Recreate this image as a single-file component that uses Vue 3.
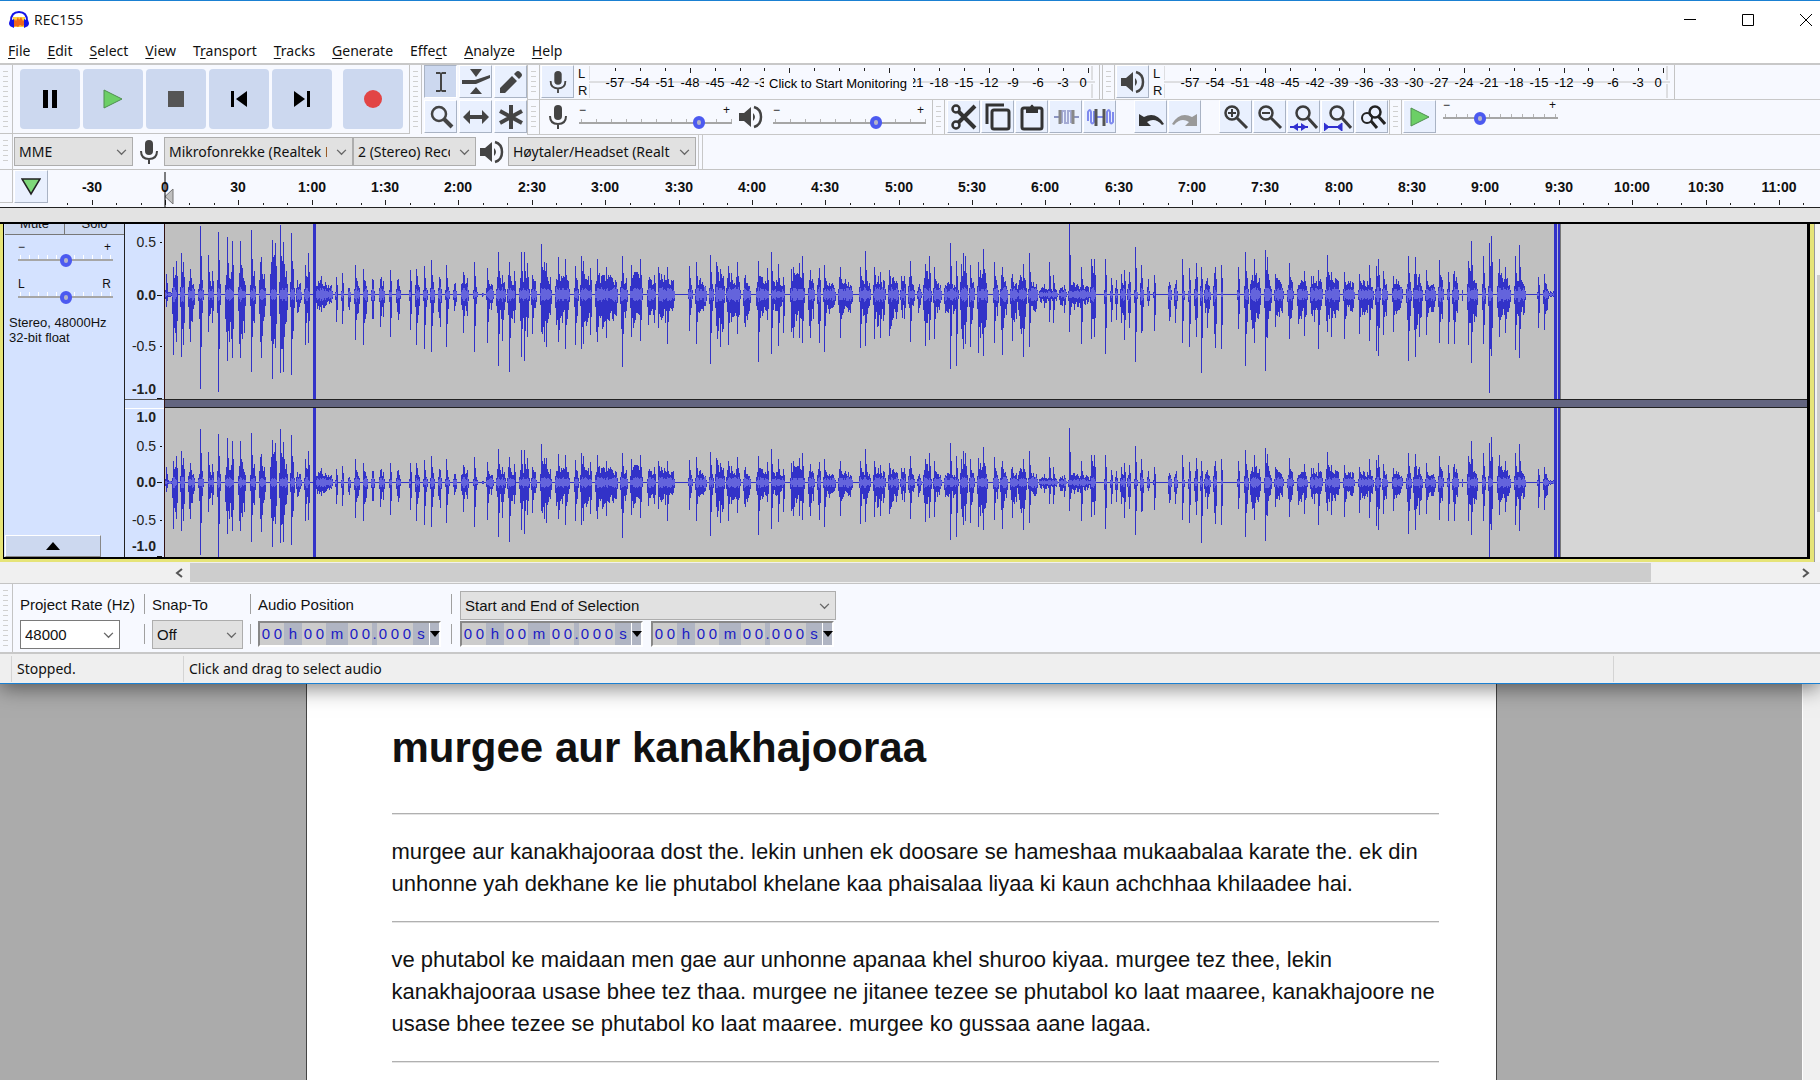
<script setup>
const menus = ['File', 'Edit', 'Select', 'View', 'Transport', 'Tracks', 'Generate', 'Effect', 'Analyze', 'Help']
const accel = { Effect: 4, Transport: 1 }
const menuParts = menus.map((m) => {
  const i = accel[m] ?? 0
  return [m.slice(0, i), m.slice(i, i + 1), m.slice(i + 1)]
})

const transport = [
  { icon: 'pause', label: 'Pause' },
  { icon: 'play', label: 'Play' },
  { icon: 'stop', label: 'Stop' },
  { icon: 'start', label: 'Skip to Start' },
  { icon: 'end', label: 'Skip to End' },
  { icon: 'record', label: 'Record' },
]
const tools = [
  { icon: 'ibeam', label: 'Selection Tool' },
  { icon: 'envelope', label: 'Envelope Tool' },
  { icon: 'pencil', label: 'Draw Tool' },
  { icon: 'zoom', label: 'Zoom Tool' },
  { icon: 'shift', label: 'Time Shift Tool' },
  { icon: 'multi', label: 'Multi-Tool' },
]
const editGroups = [
  [['cut', 'Cut'], ['copy', 'Copy'], ['paste', 'Paste'], ['trim', 'Trim Audio'], ['silence', 'Silence Audio']],
  [['undo', 'Undo'], ['redo', 'Redo']],
  [['zoomin', 'Zoom In'], ['zoomout', 'Zoom Out'], ['fitsel', 'Fit Selection'], ['fitproj', 'Fit Project'], ['toggle', 'Zoom Toggle']],
]

// dB scale of the level meters: one mark each 3 dB, from -57 to 0
const dbMarks = Array.from({ length: 20 }, (_, i) => {
  const db = -57 + i * 3
  return { db, x: Math.round(26 + i * 24.9), tall: db % 12 === 0 }
})
// the monitoring hint covers these marks of the recording meter
const covered = (m, db) => m === 'mic' && db >= -36 && db <= -24

// time ruler: one small mark each 10 s, a label each 30 s
const clock = (s) => {
  if (Math.abs(s) < 60) return String(s)
  return Math.floor(s / 60) + ':' + String(s % 60).padStart(2, '0')
}
const timeMarks = Array.from({ length: 74 }, (_, i) => {
  const s = (i - 6) * 10
  return { s, x: Math.round(117 + (s / 30) * 73.36), label: s % 30 === 0 && s > -60 ? clock(s) : '' }
})

const upperScale = [['0.5', 18], ['0.0', 71], ['-0.5', 122], ['-1.0', 165]]
const lowerScale = [['1.0', 193], ['0.5', 222], ['0.0', 258], ['-0.5', 296], ['-1.0', 322]]

// Speech bursts: from, to, body above, body below, then peaks as position, above, below.
// Positions are in steps of 1/unit pixel after origin, levels in 1/312 of full scale.
const takes = [
  { origin: -165, unit: 3, bursts: [
    [495, 500, 50, 30, 498, 60, 35], [500, 515, 8, 8], [515, 531, 60, 120, 519, 82, 180, 528, 100, 140],
    [541, 556, 60, 100, 543, 122, 187, 550, 95, 150], [563, 584, 60, 95, 571, 75, 142], [594, 611, 45, 70, 599, 205, 282],
    [623, 641, 40, 60, 625, 118, 112, 637, 70, 85], [652, 664, 90, 110, 655, 186, 292],
    [676, 702, 90, 140, 681, 170, 198, 697, 160, 188], [713, 739, 90, 150, 719, 160, 188], [750, 768, 75, 90, 753, 193, 230],
    [778, 798, 90, 120, 782, 110, 190], [811, 832, 120, 170, 816, 163, 251, 824, 152, 160],
    [837, 863, 90, 190, 839, 208, 233, 848, 155, 230], [870, 885, 80, 120, 874, 182, 240], [888, 907, 38, 45],
    [911, 931, 55, 60, 914, 88, 150, 925, 122, 143], [946, 998, 38, 38, 962, 55, 50], [1005, 1012, 30, 50, 1008, 50, 82],
    [1023, 1032, 30, 55, 1027, 62, 88], [1044, 1054, 35, 75], [1062, 1080, 50, 85, 1064, 88, 135],
    [1088, 1104, 45, 70, 1090, 75, 150], [1112, 1125, 40, 70], [1138, 1156, 45, 75, 1140, 45, 95],
    [1166, 1176, 35, 70, 1170, 73, 125], [1187, 1202, 40, 60, 1193, 45, 75], [1228, 1234, 35, 40, 1229, 73, 105],
    [1246, 1259, 60, 100, 1248, 75, 150],
  ] },
  { origin: 235, unit: 2.8, bursts: [
    [63, 77, 40, 40, 66, 85, 163], [84, 98, 45, 70, 87, 103, 171], [105, 118, 60, 120], [127, 141, 35, 55, 129, 88, 156],
    [147, 160, 38, 60], [172, 193, 55, 70, 177, 65, 115], [204, 217, 25, 30, 206, 96, 171], [230, 236, 10, 12],
    [242, 262, 35, 50, 244, 77, 145], [270, 297, 45, 75, 275, 127, 212, 285, 58, 138], [299, 323, 50, 75, 304, 96, 232, 318, 70, 83],
    [333, 364, 55, 85, 339, 126, 185, 346, 126, 197, 356, 92, 125], [367, 383, 42, 80, 370, 58, 118],
    [392, 425, 65, 115, 395, 149, 110, 402, 95, 140, 408, 92, 155], [435, 475, 60, 95, 443, 110, 140, 461, 104, 162],
    [487, 500, 50, 70, 490, 85, 150], [504, 537, 65, 90, 507, 115, 162, 513, 100, 148, 531, 77, 120],
    [546, 609, 60, 95, 551, 104, 140, 577, 80, 130], [617, 638, 55, 85, 621, 115, 215],
    [645, 680, 70, 95, 648, 88, 125, 672, 106, 137], [691, 716, 45, 75, 710, 58, 83], [721, 770, 50, 80, 723, 80, 100, 747, 80, 148],
    [806, 820, 40, 50, 808, 85, 107], [827, 859, 45, 55, 830, 96, 148], [865, 879, 45, 70, 868, 118, 208],
    [882, 911, 75, 125, 896, 76, 156], [914, 956, 55, 75, 917, 83, 150, 944, 96, 118], [960, 982, 45, 75, 965, 58, 95],
    [998, 1033, 50, 65, 1001, 100, 202, 1028, 78, 75], [1038, 1078, 38, 45, 1039, 127, 178, 1057, 90, 152, 1073, 50, 115],
    [1093, 1135, 60, 90, 1101, 80, 128, 1116, 92, 128, 1126, 115, 143], [1143, 1161, 50, 85, 1147, 72, 128],
    [1168, 1180, 60, 110, 1172, 78, 143], [1184, 1221, 38, 55, 1186, 88, 171], [1226, 1267, 42, 65, 1231, 80, 130],
    [1286, 1320, 45, 60, 1288, 80, 160, 1302, 130, 152], [1324, 1361, 50, 90, 1327, 80, 132, 1343, 66, 130],
    [1366, 1397, 55, 85, 1368, 73, 122], [1401, 1416, 45, 60, 1410, 55, 73], [1423, 1442, 45, 55, 1428, 100, 140],
    [1448, 1462, 30, 45], [1464, 1490, 65, 95, 1470, 90, 152, 1480, 115, 135], [1492, 1518, 40, 50, 1495, 80, 132],
    [1524, 1566, 40, 60, 1539, 152, 223, 1557, 100, 212],
  ] },
  { origin: 785, unit: 2.8, bursts: [
    [28, 50, 85, 135, 36, 122, 162, 43, 115, 148], [54, 71, 50, 75, 57, 88, 156], [75, 106, 70, 120, 79, 95, 173, 93, 136, 182],
    [120, 137, 50, 75, 122, 96, 143], [140, 162, 50, 85, 146, 80, 180], [168, 190, 45, 80, 174, 60, 138],
    [191, 216, 65, 110, 203, 90, 185], [219, 246, 45, 60, 221, 122, 155], [250, 302, 20, 22, 262, 30, 38, 276, 96, 80, 287, 58, 83],
    [304, 327, 24, 30, 318, 28, 55], [329, 391, 30, 38, 332, 211, 110, 367, 80, 148], [393, 410, 80, 100, 395, 106, 132, 402, 104, 125],
    [430, 439, 30, 50, 433, 106, 178], [449, 457, 25, 50, 451, 47, 80], [463, 471, 45, 70], [477, 492, 50, 80, 487, 73, 136],
    [496, 507, 40, 60, 501, 66, 100], [515, 525, 30, 50, 518, 140, 202], [533, 542, 65, 105, 536, 88, 114], [551, 559, 40, 60],
    [568, 575, 15, 20, 571, 58, 107], [610, 621, 50, 80], [628, 639, 45, 80], [649, 659, 35, 65, 650, 106, 143],
    [666, 675, 40, 75, 668, 78, 156], [684, 693, 40, 75, 689, 92, 125], [700, 709, 55, 80, 703, 80, 235],
    [711, 731, 35, 60, 720, 47, 100], [737, 748, 60, 100, 741, 80, 160], [758, 765, 45, 70, 760, 88, 163],
    [803, 811, 30, 45, 806, 80, 103], [823, 836, 50, 85, 826, 125, 212], [840, 871, 65, 95, 850, 106, 145],
    [880, 902, 50, 75, 882, 132, 228, 888, 110, 130], [908, 934, 42, 65, 911, 60, 95], [943, 964, 45, 70, 948, 92, 133],
    [972, 1002, 42, 80, 991, 70, 122], [1008, 1044, 50, 80, 1029, 73, 163], [1050, 1091, 50, 75, 1056, 118, 110, 1068, 65, 125],
    [1100, 1134, 42, 60, 1102, 65, 133], [1142, 1186, 38, 55, 1145, 60, 118, 1173, 88, 137],
    [1190, 1206, 50, 80, 1193, 85, 168, 1197, 106, 182], [1209, 1227, 50, 70, 1212, 70, 120], [1237, 1269, 42, 55, 1240, 55, 110],
    [1277, 1293, 45, 65, 1281, 115, 197], [1296, 1323, 50, 95, 1302, 110, 185, 1312, 60, 125], [1330, 1361, 38, 60, 1334, 73, 120],
    [1366, 1383, 60, 95, 1369, 103, 145], [1391, 1399, 40, 60, 1395, 66, 148], [1405, 1425, 50, 65, 1411, 70, 148],
    [1433, 1437, 30, 45], [1447, 1477, 70, 110, 1450, 100, 150, 1459, 160, 204], [1490, 1502, 60, 100, 1492, 115, 148],
    [1505, 1521, 85, 130, 1509, 152, 294, 1515, 175, 182], [1532, 1572, 55, 80, 1537, 106, 125, 1553, 80, 115],
  ] },
  { origin: 1235, unit: 3, bursts: [
    [342, 378, 45, 80, 346, 115, 165, 357, 148, 188], [410, 418, 15, 25, 413, 50, 98], [430, 447, 30, 50, 432, 60, 105],
    [448, 458, 8, 8], [458, 478, 22, 22],
  ] },
]

const END = 1395
const above = new Array(END).fill(1)
const below = new Array(END).fill(1)
const rms = new Array(END).fill(0)
const noise = (x) => {
  const n = Math.sin(x * 12.9898) * 43758.5453
  return n - Math.floor(n)
}
for (const { origin, unit, bursts } of takes) {
  for (const [from, to, up, down, ...peaks] of bursts) {
    const a = Math.round(origin + from / unit)
    const b = Math.round(origin + to / unit)
    for (let x = a; x < b; x++) {
      const t = (x - a) / Math.max(1, b - a)
      const edge = x === a || x === b - 1 ? 0.4 : 1
      const fade = (1.2 - 0.5 * t) * edge
      above[x] = Math.max(above[x], up * fade * (0.5 + 0.6 * noise(x)))
      below[x] = Math.max(below[x], down * fade * (0.5 + 0.6 * noise(x + 500)))
      rms[x] = Math.min(up * 0.35, 16) * (0.5 + 0.8 * noise(x + 900)) * edge
    }
    for (let i = 0; i < peaks.length; i += 3) {
      const x = Math.round(origin + peaks[i] / unit)
      above[x] = peaks[i + 1]
      below[x] = peaks[i + 2]
      above[x + 1] = Math.max(above[x + 1], peaks[i + 1] * 0.55)
      below[x + 1] = Math.max(below[x + 1], peaks[i + 2] * 0.55)
    }
  }
}
for (const [a, b] of [[148, 151], [1389, 1392], [1393, 1395]]) {
  for (let x = a; x < b; x++) {
    above[x] = below[x] = 600
    rms[x] = 0
  }
}

function wave(mid, half, top, bottom, up, down) {
  let d = ''
  for (let x = 0; x < END; x++) {
    if (!up[x]) continue
    const y0 = Math.max(top, Math.round(mid - (up[x] * half) / 312))
    const y1 = Math.min(bottom, Math.round(mid + 1 + (down[x] * half) / 312))
    d += `M${x} ${y0}h1V${y1}h-1z`
  }
  return d
}
const upper = wave(70, 104, 0, 175, above, below)
const upperRms = wave(70, 104, 0, 175, rms, rms)
const lower = wave(258, 80, 184, 333, above, below)
const lowerRms = wave(258, 80, 184, 333, rms, rms)

const timeFields = [
  ['d', '00'], ['h', 'h'], ['d', '00'], ['m', 'm'], ['d', '00'], ['p', '.'], ['d', '000'], ['s', 's'],
]
</script>

<template>
  <svg class="defs" aria-hidden="true">
    <symbol id="pause" viewBox="0 0 20 20"><path d="M3 1h5v18H3zM12 1h5v18h-5z" fill="#000" /></symbol>
    <symbol id="play" viewBox="0 0 20 20"><path d="M1 1 19 10 1 19z" fill="#6ccf66" stroke="#4f8f50" /></symbol>
    <symbol id="stop" viewBox="0 0 20 20"><path d="M2 2h16v16H2z" fill="#555" /></symbol>
    <symbol id="start" viewBox="0 0 20 20"><path d="M2 2h3v16H2zM18 2v16L7 10z" fill="#000" /></symbol>
    <symbol id="end" viewBox="0 0 20 20"><path d="M15 2h3v16h-3zM2 2v16l11-8z" fill="#000" /></symbol>
    <symbol id="record" viewBox="0 0 20 20"><circle cx="10" cy="10" r="9" fill="#e24545" /></symbol>
    <symbol id="ibeam" viewBox="0 0 28 28"><path d="M9 4h4l1 1 1-1h4v2h-4v16h4v2h-4l-1-1-1 1H9v-2h4V6H9z" fill="#444" /></symbol>
    <symbol id="envelope" viewBox="0 0 28 28"><path d="M8 1h12l-6 8zM8 26h12l-6-7zM0 12h13l15-5v3l-14 6H0z" fill="#444" /></symbol>
    <symbol id="pencil" viewBox="0 0 28 28"><path d="m3 20 12-12 5 5L8 25H3zM17 6l2-2q2-2 4 0l1 1q2 2 0 4l-2 2z" fill="#444" /></symbol>
    <symbol id="zoom" viewBox="0 0 28 28"><g fill="none" stroke="#444"><circle cx="12" cy="11" r="7" stroke-width="2.5" /><path d="m17 16 8 8" stroke-width="4" /></g></symbol>
    <symbol id="shift" viewBox="0 0 28 28"><path d="m1 14 7-7v5h12V7l7 7-7 7v-5H8v5z" fill="#444" /></symbol>
    <symbol id="multi" viewBox="0 0 28 28"><path d="M14 2v24M3 8l22 12M25 8 3 20" stroke="#444" stroke-width="4" /></symbol>
    <symbol id="mic" viewBox="0 0 20 26"><rect x="6" y="1" width="8" height="15" rx="4" fill="#444" /><path d="M2 12q0 8 8 8t8-8M10 20v5" fill="none" stroke="#444" stroke-width="2" /></symbol>
    <symbol id="speaker" viewBox="0 0 24 24"><path d="M0 8h5l7-6v20l-7-6H0zM14 8q4 4 0 8z" fill="#444" /><path d="M15 2q7 2 7 10t-7 10" fill="none" stroke="#444" stroke-width="2.5" /></symbol>
    <symbol id="cut" viewBox="0 0 28 28"><g fill="none" stroke="#333"><circle cx="6" cy="6" r="3.5" stroke-width="2.5" /><circle cx="6" cy="22" r="3.5" stroke-width="2.5" /><path d="m8 8 17 17M8 20 25 3" stroke-width="4" /></g></symbol>
    <symbol id="copy" viewBox="0 0 28 28"><g fill="none" stroke="#333" stroke-width="3"><path d="M3 21V2h17" /><rect x="8" y="7" width="17" height="19" rx="2" /></g></symbol>
    <symbol id="paste" viewBox="0 0 28 28"><rect x="4" y="5" width="20" height="21" rx="2" fill="none" stroke="#333" stroke-width="3" /><path d="M8 4h4q2-5 4 0h4v6H8z" fill="#333" /></symbol>
    <symbol id="trim" viewBox="0 0 28 28"><path d="M2 14h6M21 14h6" stroke="#8c95c4" stroke-width="2" /><path d="M10 20V8h3v12h3V8h3v12" fill="none" stroke="#a4abd4" stroke-width="2" /><path d="M8 7v14M21 7v14" stroke="#888" stroke-width="3" /></symbol>
    <symbol id="silence" viewBox="0 0 28 28"><path d="M2 18V9q2-4 3 0v10q1 3 3 0V8M9 14h10M21 20V9q2-4 3 0v10q1 3 3 0V9" fill="none" stroke="#7f8aee" stroke-width="2" /><path d="M10 6v17M18 6v17" stroke="#555" stroke-width="3" /></symbol>
    <symbol id="undo" viewBox="0 0 28 28"><path d="M2 11v12h12l-4-4q8-5 15 3l2-1Q19 8 7 14z" fill="#333" /></symbol>
    <symbol id="redo" viewBox="0 0 28 28"><path d="M26 11v12H14l4-4q-8-5-15 3l-2-1Q9 8 21 14z" fill="#999" /></symbol>
    <symbol id="zoomin" viewBox="0 0 28 28"><g fill="none" stroke="#3c3c3c"><circle cx="10" cy="10" r="6.5" stroke-width="2.500" /><path d="m15 15 10 10" stroke-width="3" /><path d="M6 10h8M10 6v8" stroke-width="2" /></g></symbol>
    <symbol id="zoomout" viewBox="0 0 28 28"><g fill="none" stroke="#3c3c3c"><circle cx="10" cy="10" r="6.5" stroke-width="2.500" /><path d="m15 15 10 10" stroke-width="3" /><path d="M6 10h8" stroke-width="2" /></g></symbol>
    <symbol id="fitsel" viewBox="0 0 28 28"><g fill="none" stroke="#3c3c3c"><circle cx="13" cy="10" r="6.5" stroke-width="2.500" /><path d="m18 15 9 10" stroke-width="3" /></g><path d="M0 24h18" stroke="#3030d0" stroke-width="2" /><path d="M8 20v8l-6-4zM11 20v8l6-4z" fill="#3030d0" /></symbol>
    <symbol id="fitproj" viewBox="0 0 28 28"><g fill="none" stroke="#3c3c3c"><circle cx="13" cy="10" r="6.5" stroke-width="2.500" /><path d="m18 15 9 10" stroke-width="3" /></g><path d="M1 24h16" stroke="#3030d0" stroke-width="2" /><path d="M0 20v8l5-4zM18 20v8l-5-4z" fill="#3030d0" stroke="#3030d0" /></symbol>
    <symbol id="toggle" viewBox="0 0 28 28"><g fill="none" stroke="#222"><circle cx="17" cy="9" r="5.500" stroke-width="2.500" /><circle cx="9" cy="15" r="5" stroke-width="2" /><path d="m13 18 6 7M20 13l7 8" stroke-width="3" /></g></symbol>
    <symbol id="chev" viewBox="0 0 12 8"><path d="m1 1 5 5 5-5" fill="none" stroke="#666" stroke-width="1.5" /></symbol>
  </svg>

  <main class="desktop">
    <section class="window">
      <header class="title">
        <svg class="logo" viewBox="0 0 20 18" aria-hidden="true">
          <rect x="4" y="6" width="12" height="10" fill="#ffd23a" />
          <path d="m4 11 2-3 1 2 2-4 1 3 2-3 2 4 2-2v6l-3 1-2-1-2 2-2-1-3 1z" fill="#f0661c" />
          <path d="M2 10Q2 1 10 1t8 9" fill="none" stroke="#1414e6" stroke-width="2" />
          <path d="M1 9h2l2-1v9l-2-1Q0 15 0 12zM19 9h-2l-2-1v9l2-1q3-1 3-4z" fill="#1414e6" />
        </svg>
        <h1>REC155</h1>
        <div class="winbtns">
          <button aria-label="Minimize"><svg viewBox="0 0 12 12"><path d="M0 5.500h12" /></svg></button>
          <button aria-label="Maximize"><svg viewBox="0 0 12 12"><path d="M.5.5h11v11H.5z" /></svg></button>
          <button aria-label="Close"><svg viewBox="0 0 12 12"><path d="m0 0 12 12M12 0 0 12" /></svg></button>
        </div>
      </header>

      <nav class="menubar">
        <button v-for="(p, i) in menuParts" :key="i">{{ p[0] }}<u>{{ p[1] }}</u>{{ p[2] }}</button>
      </nav>

      <div class="dock">
        <div class="bar transport">
          <i class="grip"></i>
          <div class="pads">
            <button v-for="b in transport" :key="b.icon" :class="b.icon" :aria-label="b.label">
              <svg><use :href="'#' + b.icon" /></svg>
            </button>
          </div>
        </div>
        <div class="bar tools">
          <i class="grip"></i>
          <div class="toolgrid">
            <button v-for="(b, i) in tools" :key="b.icon" class="key" :class="{ on: i === 0 }" :aria-label="b.label">
              <svg><use :href="'#' + b.icon" /></svg>
            </button>
          </div>
        </div>
        <div class="stack">
          <div class="row">
            <div class="bar meterbar" v-for="m in ['mic', 'speaker']" :key="m">
              <i class="grip"></i>
              <button class="key" :aria-label="m === 'mic' ? 'Record Meter' : 'Playback Meter'"><svg><use :href="'#' + m" /></svg></button>
              <div class="lr"><span>L</span><span>R</span></div>
              <svg class="meter" width="506" height="34">
                <path d="M0 1v14M0 19v14M0 17H506M503 1v14M503 19v14" stroke="#c4c4c4" fill="none" />
                <g v-for="k in dbMarks" :key="k.db">
                  <path :d="`M${k.x + 0.5} 3v${k.tall ? 5 : 3}`" stroke="#222" />
                  <text v-if="!covered(m, k.db)" :x="k.db === 0 ? 494 : k.x" y="22" text-anchor="middle">{{ k.db }}</text>
                </g>
                <g v-if="m === 'mic'">
                  <rect x="175" y="8" width="149" height="20" fill="#f7f9ff" />
                  <text x="180" y="23">Click to Start Monitoring</text>
                </g>
              </svg>
            </div>
          </div>
          <div class="row">
            <div class="bar mixer">
              <i class="grip"></i>
              <svg class="mic"><use href="#mic" /></svg>
              <label class="slider"><span class="ends"><b>−</b><b>+</b></span><input type="range" value="81" aria-label="Recording Volume" /></label>
              <svg class="spk"><use href="#speaker" /></svg>
              <label class="slider"><span class="ends"><b>−</b><b>+</b></span><input type="range" value="69" aria-label="Playback Volume" /></label>
            </div>
            <div class="bar edit">
              <i class="grip"></i>
              <div v-for="(g, i) in editGroups" :key="i" class="keys">
                <button v-for="k in g" :key="k[0]" class="key" :aria-label="k[1]"><svg><use :href="'#' + k[0]" /></svg></button>
              </div>
            </div>
            <div class="bar speed">
              <i class="grip"></i>
              <button class="key" aria-label="Play at Speed"><svg><use href="#play" /></svg></button>
              <label class="slider short"><span class="ends"><b>−</b><b>+</b></span><input type="range" value="30" aria-label="Playback Speed" /></label>
            </div>
          </div>
        </div>
      </div>

      <div class="devices">
        <i class="grip"></i>
        <div class="pick host"><select aria-label="Audio Host"><option>MME</option></select><svg><use href="#chev" /></svg></div>
        <svg class="mic"><use href="#mic" /></svg>
        <div class="pick input"><select aria-label="Recording Device"><option>Mikrofonrekke (Realtek High</option></select><svg><use href="#chev" /></svg></div>
        <div class="pick chans"><select aria-label="Recording Channels"><option>2 (Stereo) Recording</option></select><svg><use href="#chev" /></svg></div>
        <svg class="spk"><use href="#speaker" /></svg>
        <div class="pick output"><select aria-label="Playback Device"><option>Høytaler/Headset (Realtek</option></select><svg><use href="#chev" /></svg></div>
        <i class="edge"></i>
      </div>

      <div class="timeline">
        <i class="stub"></i>
        <button class="pin" aria-label="Timeline Options"><svg viewBox="0 0 20 18"><path d="M1 1h18l-9 15z" fill="#7fd87a" stroke="#222" stroke-width="1.500" /></svg></button>
        <svg class="ruler" height="37">
          <g v-for="k in timeMarks" :key="k.s">
            <path :d="`M${k.x + 0.5} ${k.label ? 30 : 33}V35`" stroke="#222" />
            <text v-if="k.label" :x="k.x" y="22" text-anchor="middle">{{ k.label }}</text>
          </g>
          <path d="M125 19v15l-8-7.500z" fill="#c0c0c0" stroke="#777" />
          <path d="M117 2v35" stroke="#000" />
        </svg>
      </div>
      <div class="gap"></div>

      <div class="project">
        <div class="track">
          <div class="panel">
            <div class="mutes"><button>Mute</button><button>Solo</button></div>
            <label class="slider small"><span class="ends"><b>−</b><b>+</b></span><input type="range" value="50" aria-label="Gain" /></label>
            <label class="slider small"><span class="ends"><b>L</b><b>R</b></span><input type="range" value="50" aria-label="Pan" /></label>
            <p>Stereo, 48000Hz<br />32-bit float</p>
            <button class="fold" aria-label="Collapse"><svg viewBox="0 0 14 8"><path d="M0 8 7 0l7 8z" /></svg></button>
          </div>
          <svg class="vruler" width="39" height="333">
            <path d="M0 175.500H39" stroke="#555" /><path d="M0 184.500H39" stroke="#fff" />
            <g v-for="s in [...upperScale, ...lowerScale]" :key="s[1]">
              <text :x="31" :y="s[1] + 5" text-anchor="end" :class="{ strong: !s[0].endsWith('5') }">{{ s[0] }}</text>
              <path v-if="!s[0].endsWith('1.0')" :d="`M${s[0] === '0.0' ? 32 : 35} ${s[1] + 0.5}H37`" stroke="#111" />
            </g>
            <path d="M32 174.500h5M32 332.500h5" stroke="#111" />
          </svg>
          <div class="wave">
            <svg width="1396" height="333" role="img" aria-label="Waveform" shape-rendering="crispEdges">
              <rect width="1395" height="333" fill="#c0c0c0" />
              <path :d="upper + lower" fill="#3232c8" />
              <path :d="upperRms + lowerRms" fill="#6464dc" />
              <rect x="1392" width="1" height="333" fill="#b8b8dc" />
              <rect x="1395" width="1" height="333" fill="#777" />
            </svg>
            <i class="split"></i>
          </div>
        </div>
        <div class="vscroll"><i></i></div>
      </div>
      <div class="hscroll">
        <button aria-label="Scroll left"><svg viewBox="0 0 8 10"><path d="M7 1 2 5l5 4" /></svg></button>
        <div class="rail"><i></i></div>
        <button aria-label="Scroll right"><svg viewBox="0 0 8 10"><path d="m1 1 5 4-5 4" /></svg></button>
      </div>

      <div class="selbar">
        <i class="grip"></i>
        <div class="field rate">
          <label for="rate">Project Rate (Hz)</label>
          <div class="pick"><select id="rate"><option>48000</option></select><svg><use href="#chev" /></svg></div>
        </div>
        <div class="seps"><i></i><i></i></div>
        <div class="field snap">
          <label for="snap">Snap-To</label>
          <div class="pick"><select id="snap"><option>Off</option></select><svg><use href="#chev" /></svg></div>
        </div>
        <div class="seps"><i></i><i></i></div>
        <div class="field">
          <span class="cap">Audio Position</span>
          <div class="times"><div class="time"><span v-for="(f, i) in timeFields" :key="i" :class="f[0]"><b v-for="(c, j) in f[1]" :key="j">{{ c }}</b></span><button aria-label="Format"></button></div></div>
        </div>
        <div class="seps wide"><i></i><i></i></div>
        <div class="field">
          <div class="pick mode"><select aria-label="Selection Mode"><option>Start and End of Selection</option></select><svg><use href="#chev" /></svg></div>
          <div class="times">
            <div v-for="n in 2" :key="n" class="time"><span v-for="(f, i) in timeFields" :key="i" :class="f[0]"><b v-for="(c, j) in f[1]" :key="j">{{ c }}</b></span><button aria-label="Format"></button></div>
          </div>
        </div>
      </div>

      <footer class="status"><span class="state">Stopped.</span><span class="hint">Click and drag to select audio</span><span class="tail"></span></footer>
    </section>

    <section class="reader">
      <div class="canvas">
        <article>
          <h2>murgee aur kanakhajooraa</h2>
          <hr />
          <p>murgee aur kanakhajooraa dost the. lekin unhen ek doosare se hameshaa mukaabalaa karate the. ek din unhonne yah dekhane ke lie phutabol khelane kaa phaisalaa liyaa ki kaun achchhaa khilaadee hai.</p>
          <hr />
          <p>ve phutabol ke maidaan men gae aur unhonne apanaa khel shuroo kiyaa. murgee tez thee, lekin kanakhajooraa usase bhee tez thaa. murgee ne jitanee tezee se phutabol ko laat maaree, kanakhajoore ne usase bhee tezee se phutabol ko laat maaree. murgee ko gussaa aane lagaa.</p>
          <hr />
        </article>
      </div>
      <div class="pagescroll"></div>
    </section>
  </main>
</template>

<style>
body { margin: 0; background: #ababab; }
</style>

<style scoped>
* { box-sizing: border-box; }
button, select, input { font: inherit; color: inherit; margin: 0; padding: 0; border: 0; background: none; border-radius: 0; }
svg { display: block; flex: none; }
i { display: block; flex: none; }
.defs { position: absolute; width: 0; height: 0; }
.desktop { display: flex; flex-direction: column; min-height: 100vh; overflow: hidden; font-family: "Liberation Sans", Arial, sans-serif; font-size: 14px; color: #111; }
.window { position: relative; z-index: 1; background: #f7f9ff; border-top: 1px solid #1a80d2; border-bottom: 1px solid #1a80d2; box-shadow: 0 4px 20px rgba(0, 0, 0, 0.5); }

.title { display: flex; align-items: center; height: 37px; padding: 0 8px 0 9px; background: #fff; }
.logo { width: 20px; height: 18px; }
.title h1 { margin: 0 0 0 5px; font: 14px "Open Sans", sans-serif; }
.winbtns { display: flex; gap: 46px; margin-left: auto; }
.winbtns svg { width: 12px; height: 12px; fill: none; stroke: #000; }
.menubar { display: flex; gap: 17px; height: 27px; padding: 0 8px; background: #fff; border-bottom: 2px solid #c8c8c8; font: 14px "Noto Sans", sans-serif; }
.menubar u { text-underline-offset: 2px; }

.dock { display: flex; height: 69px; }
.bar { display: flex; }
.grip { width: 13px; align-self: stretch; border-right: 1px solid #c4c4c4; border-left: 1px solid #c4c4c4; background: repeating-linear-gradient(#d0d0d0 0 1px, transparent 1px 5px) 3px 6px / 5px calc(100% - 10px) no-repeat; }
.transport { border-bottom: 1px solid #c4c4c4; }
.transport .grip { border-left: 0; }
.pads { display: flex; align-items: center; gap: 3px; padding: 0 6px 0 7px; }
.pads button { display: grid; place-items: center; width: 60px; height: 60px; border-radius: 4px; background: #ccd8ef; }
.pads svg { width: 20px; height: 20px; }
.pads .record { margin-left: 8px; }
.toolgrid { display: grid; grid-template-columns: repeat(3, 33px); grid-template-rows: repeat(2, 33px); gap: 2px; padding-left: 2px; }
.key { display: grid; place-items: center; flex: none; width: 33px; height: 33px; background: #e9f0fe; border: 1px solid #fff; border-right-color: #a9b3c4; border-bottom-color: #a9b3c4; }
.key svg { width: 28px; height: 28px; }
.key.on { background: #ccd8ef; border-color: #a9b3c4 #fff #fff #a9b3c4; }
.stack { flex: 1; min-width: 0; }
.row { display: flex; height: 35px; border-bottom: 1px solid #c8c8c8; }
.meterbar .key { margin-left: 1px; }
.meterbar .key svg { width: 24px; height: 24px; }
.meterbar { padding-right: 4px; border-right: 1px solid #c4c4c4; margin-right: 2px; }
.lr { display: flex; flex-direction: column; width: 15px; padding-left: 4px; line-height: 17px; font-size: 13px; }
.meter text { font-size: 13px; }
.mixer { align-items: center; padding-right: 6px; }
.mic { width: 20px; height: 26px; }
.spk { width: 24px; height: 24px; }
.mixer .mic { margin: 0 11px 0 8px; }
.mixer .spk { margin: 0 10px 0 7px; }
.slider { display: block; width: 153px; }
.slider.short { width: 115px; margin-left: 7px; }
.slider.small { width: 95px; }
.ends { display: flex; justify-content: space-between; height: 11px; padding: 0 2px 0 0; line-height: 11px; font-size: 12px; }
.ends b { font-weight: 400; }
.slider input { display: block; width: 100%; height: 14px; appearance: none; background: linear-gradient(#a6a6a6, #a6a6a6) 0 6px / 100% 2px no-repeat, repeating-linear-gradient(90deg, #b4b4b4 0 1px, transparent 1px 15px) 2px 3px / 100% 3px no-repeat; }
.slider.short input { background: linear-gradient(#a6a6a6, #a6a6a6) 0 6px / 100% 2px no-repeat, repeating-linear-gradient(90deg, #b4b4b4 0 1px, transparent 1px 11px) 2px 3px / 100% 3px no-repeat; }
.slider.small input { background: linear-gradient(#a6a6a6, #a6a6a6) 0 6px / 100% 2px no-repeat, repeating-linear-gradient(90deg, #fff 0 1px, transparent 1px 9px) 2px 2px / 100% 4px no-repeat; }
.slider input::-webkit-slider-thumb { appearance: none; width: 12px; height: 13px; border: 4px solid #4c5af0; border-radius: 6px; background: #b4b4c8; }
.keys { display: flex; gap: 1px; margin-right: 18px; }
.edit .keys:last-child { margin-right: 1px; }
.edit .grip { margin-right: 2px; }
.speed .key svg { width: 20px; height: 22px; }
.speed .key { margin-left: 1px; }

.devices { display: flex; align-items: center; height: 36px; border-bottom: 1px solid #c4c4c4; }
.devices .grip { border-left: 0; margin-right: 1px; }
.pick { position: relative; height: 29px; background: #e1e1e1; border: 1px solid #adadad; font: 14px "Noto Sans", sans-serif; }
.pick select { display: block; width: calc(100% - 25px); height: 27px; padding-left: 4px; appearance: none; overflow: hidden; white-space: nowrap; text-overflow: clip; }
.pick svg { position: absolute; right: 5px; top: 11px; width: 11px; height: 7px; pointer-events: none; }
.host { width: 119px; }
.input { width: 189px; }
.chans { width: 123px; }
.output { width: 188px; }
.devices .mic { margin: 0 5px 0 6px; }
.devices .spk { margin: 0 4px; }
.edge { width: 5px; height: 35px; margin-left: 2px; border: 1px solid #c8c8c8; border-width: 0 1px; }

.timeline { display: flex; height: 37px; }
.stub { width: 13px; height: 33px; border: 1px solid #c4c4c4; border-width: 0 1px 1px 0; }
.pin { display: grid; place-items: center; width: 34px; height: 33px; margin: 0 0 0 1px; background: #e9f0fe; border: 1px solid #fff; border-right-color: #a9b3c4; border-bottom-color: #a9b3c4; }
.pin svg { width: 20px; height: 18px; }
.ruler { flex: 1; min-width: 0; }
.ruler text { font-size: 14px; font-weight: 700; fill: #111; }
.gap { height: 17px; background: #e3e3e3; border-top: 1px solid #222; border-bottom: 2px solid #000; }

.project { display: flex; }
.track { display: flex; flex: 1; min-width: 0; border-style: solid; border-color: #e6e478; border-width: 0 4px 3px 3px; background: #d4e2ff; box-shadow: inset 1px 0 #000, inset -3px 0 #000, inset 0 -2px #000; padding: 0 3px 2px 2px; }
.panel { display: flex; flex-direction: column; width: 120px; height: 333px; border-right: 1px solid #222; }
.mutes { display: flex; height: 11px; overflow: hidden; border-bottom: 1px solid #777; background: #ccd8ef; }
.mutes button { flex: 1; height: 11px; display: flex; align-items: flex-end; justify-content: center; line-height: 16px; font-size: 13px; overflow: hidden; padding-bottom: 3px; }
.mutes button + button { border-left: 1px solid #777; }
.panel .slider { margin: 7px 0 0 13px; height: 24px; }
.panel .slider + .slider { margin-top: 13px; }
.panel p { margin: 12px 0 0 4px; font-size: 13px; line-height: 15px; white-space: nowrap; }
.fold { display: grid; place-items: center; width: 96px; height: 22px; margin-top: auto; background: #ccd8ef; border: 1px solid #fff; border-right-color: #888; border-bottom-color: #888; }
.fold svg { width: 14px; height: 8px; }
.vruler text { font-size: 14px; fill: #222; }
.vruler .strong { font-weight: 700; }
.wave { position: relative; flex: 1; min-width: 0; height: 333px; overflow: hidden; background: #d6d6d6; border-left: 1px solid #301010; }
.split { position: absolute; left: 0; right: 0; top: 175px; height: 9px; background: #636580; border: 1px solid #222; border-width: 1px 0; }
.vscroll { width: 6px; padding: 20px 0 0 2px; background: #f4f4f4; border-left: 1px solid #999; }
.vscroll i { height: 237px; margin-top: 31px; background: #cdcdcd; }
.hscroll { display: flex; align-items: center; height: 22px; padding: 0 10px 0 175px; background: #f0f0f0; border-bottom: 1px solid #c4c4c4; }
.hscroll svg { width: 8px; height: 10px; fill: none; stroke: #555; stroke-width: 2; }
.rail { flex: 1; height: 19px; margin: 0 7px; }
.rail i { width: 91%; height: 19px; background: #cdcdcd; }

.selbar { display: flex; height: 70px; border-bottom: 2px solid #c8c8c8; }
.selbar .grip { border-left: 0; margin-right: 7px; }
.field { display: flex; flex-direction: column; padding-top: 7px; font-size: 15px; }
.field label, .field .cap { height: 29px; line-height: 28px; }
.field .pick { font: 15px "Liberation Sans", Arial, sans-serif; }
.rate { width: 117px; }
.rate .pick { width: 100px; background: #fff; border-color: #7a7a7a; }
.snap .pick { width: 91px; }
.mode { width: 376px; }
.seps { display: flex; flex-direction: column; gap: 10px; width: 1px; margin: 10px 7px 0; }
.seps i { height: 20px; width: 1px; background: #a0a0a0; }
.seps.wide { margin: 10px 8px 0 10px; }
.times { display: flex; gap: 8px; padding-top: 1px; }
.time { display: flex; width: 183px; height: 26px; background: #b0b5c3; border: 2px solid #888; border-right-color: #fff; border-bottom-color: #fff; color: #1a1ac4; font-size: 15px; line-height: 21px; }
.time span { display: flex; flex: none; }
.time b { width: 100%; text-align: center; font-weight: 400; }
.time .d b { width: 12px; }
.time .d { background: #ccc; }
.time .h { width: 18px; }
.time .m { width: 22px; }
.time .p { width: 5px; }
.time .s { width: 16px; }
.time button { flex: 1; display: grid; place-items: center; border-left: 1px solid #fff; }
.time button::after { content: ""; border: 5px solid transparent; border-top: 6px solid #000; border-bottom: 0; }

.status { display: flex; align-items: center; height: 29px; background: #efefef; font: 14px "Noto Sans", sans-serif; }
.status span { height: 26px; line-height: 26px; padding-left: 5px; border-left: 1px solid #d4d4d4; }
.state { width: 172px; margin-left: 11px; }
.hint { flex: 1; }
.tail { width: 207px; }

.reader { display: flex; flex: 1; height: 396px; }
.canvas { display: flex; justify-content: center; flex: 1; background: #ababab; }
.pagescroll { width: 18px; background: #f0f0f0; border-left: 1px solid #fff; }
article { width: 100%; max-width: 1191px; padding: 36px 57px 0 85px; background: #fff; border: 1px solid #444; border-width: 0 1px; color: #111; }
h2 { margin: 0; font-size: 42px; line-height: 56px; }
hr { margin: 21px 0; height: 2px; border: 0; border-top: 1px solid #b0b0b0; border-bottom: 1px solid #e4e4e4; }
h2 + hr { margin-top: 37px; }
article p { margin: 0; font-size: 22px; line-height: 32px; }
</style>
